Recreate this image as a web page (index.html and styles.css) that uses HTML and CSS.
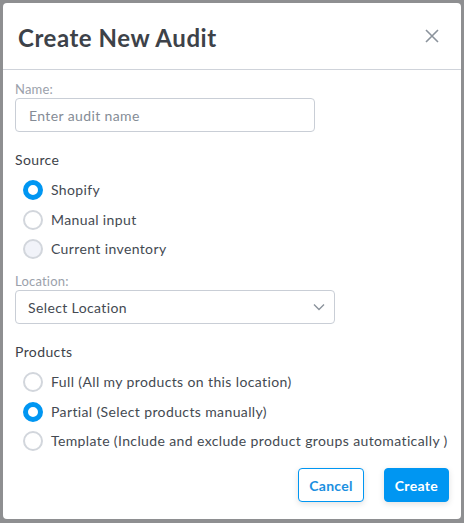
FILE: index.html
```html
<!DOCTYPE html>
<html lang="en">
<head>
    <meta charset="UTF-8">
    <meta name="viewport" content="width=device-width, initial-scale=1.0">
    <title>Create New Audit</title>
    <link rel="stylesheet" href="styles.css">
</head>
<body>
    <div class="modal">
        <div class="modal-header">
            <h1>Create New Audit</h1>
            <button class="close-button" aria-label="Close">
                <svg width="14" height="14" viewBox="0 0 14 14">
                    <path d="M1 1 L13 13 M13 1 L1 13" stroke="#8b939c" stroke-width="1.6" fill="none"/>
                </svg>
            </button>
        </div>

        <div class="modal-body">
            <label class="field-label" for="auditName">Name:</label>
            <input type="text" id="auditName" class="text-input" placeholder="Enter audit name">

            <div class="group-title">Source</div>
            <div class="radio-list">
                <label class="radio-row"><span class="radio checked"></span>Shopify</label>
                <label class="radio-row"><span class="radio"></span>Manual input</label>
                <label class="radio-row"><span class="radio muted"></span>Current inventory</label>
            </div>

            <label class="field-label location-label">Location:</label>
            <div class="select-box">
                <span>Select Location</span>
                <svg width="12" height="8" viewBox="0 0 12 8">
                    <path d="M1 1.5 L6 6.5 L11 1.5" stroke="#8b939c" stroke-width="1.4" fill="none"/>
                </svg>
            </div>

            <div class="group-title">Products</div>
            <div class="radio-list">
                <label class="radio-row"><span class="radio"></span>Full (All my products on this location)</label>
                <label class="radio-row"><span class="radio checked"></span>Partial (Select products manually)</label>
                <label class="radio-row"><span class="radio"></span>Template (Include and exclude product groups automatically )</label>
            </div>
        </div>

        <div class="modal-footer">
            <button class="btn btn-outline">Cancel</button>
            <button class="btn btn-primary">Create</button>
        </div>
    </div>
</body>
</html>
```

FILE: styles.css
```css
* {
    margin: 0;
    padding: 0;
    box-sizing: border-box;
}

body {
    font-family: Lato, 'Open Sans', sans-serif;
    background: #8e8f91;
    padding: 3px;
    height: 523px;
    color: #3d4249;
    letter-spacing: 0.38px;
}

.modal {
    background: white;
    border-radius: 4px;
    width: 458px;
    height: 516px;
    display: flex;
    flex-direction: column;
}

.modal-header {
    height: 67px;
    display: flex;
    align-items: center;
    justify-content: space-between;
    padding: 0 22px 0 15px;
    border-bottom: 1px solid #cfd3da;
}

.modal-header h1 {
    font-size: 24px;
    font-weight: bold;
    color: #3d4249;
    padding-top: 2px;
    letter-spacing: 0.55px;
}

.close-button {
    background: none;
    border: none;
    width: 14px;
    height: 14px;
    cursor: pointer;
}

.modal-body {
    padding: 11px 12px 0 12px;
    display: flex;
    flex-direction: column;
    align-items: flex-start;
}

.field-label {
    font-size: 13px;
    color: #9ba1ab;
    line-height: 16px;
    margin-bottom: 1px;
    letter-spacing: 0.2px;
}

.location-label {
    margin-top: 14px;
}

.text-input {
    width: 300px;
    height: 34px;
    border: 1px solid #c9ced6;
    border-radius: 4px;
    padding: 0 13px;
    font-size: 14px;
    font-family: inherit;
    letter-spacing: inherit;
    color: #3d4249;
    outline: none;
}

.text-input::placeholder {
    color: #858c96;
}

.group-title {
    font-size: 14px;
    line-height: 18px;
    margin-top: 19px;
}

.radio-list {
    display: flex;
    flex-direction: column;
    gap: 9.5px;
    margin-top: 11px;
    padding-left: 8px;
}

.radio-row {
    display: flex;
    align-items: center;
    gap: 8px;
    font-size: 14px;
    line-height: 20px;
    color: #444a52;
}

.radio {
    width: 20px;
    height: 20px;
    border-radius: 50%;
    border: 2px solid #d2d6dc;
    background: white;
    flex-shrink: 0;
}

.radio.muted {
    background: #f1f3f9;
}

.radio.checked {
    border: 5px solid #0096f2;
}

.select-box {
    width: 320px;
    height: 34px;
    border: 1px solid #c9ced6;
    border-radius: 4px;
    padding: 0 9px 0 12px;
    display: flex;
    align-items: center;
    justify-content: space-between;
    font-size: 14px;
    color: #444a52;
}

.modal-footer {
    margin-top: auto;
    display: flex;
    justify-content: flex-end;
    gap: 20px;
    padding: 0 12px 17px 0;
}

.btn {
    height: 34px;
    border-radius: 4px;
    font-family: inherit;
    font-size: 14px;
    font-weight: bold;
    letter-spacing: 0.3px;
    cursor: pointer;
    padding: 0 10px;
    box-shadow: 0 2px 6px rgba(0, 0, 0, 0.12);
}

.btn-outline {
    background: white;
    color: #1b8fe0;
    border: 1px solid #0096f2;
}

.btn-primary {
    background: #0096f2;
    color: white;
    border: 1px solid #0096f2;
}
```
